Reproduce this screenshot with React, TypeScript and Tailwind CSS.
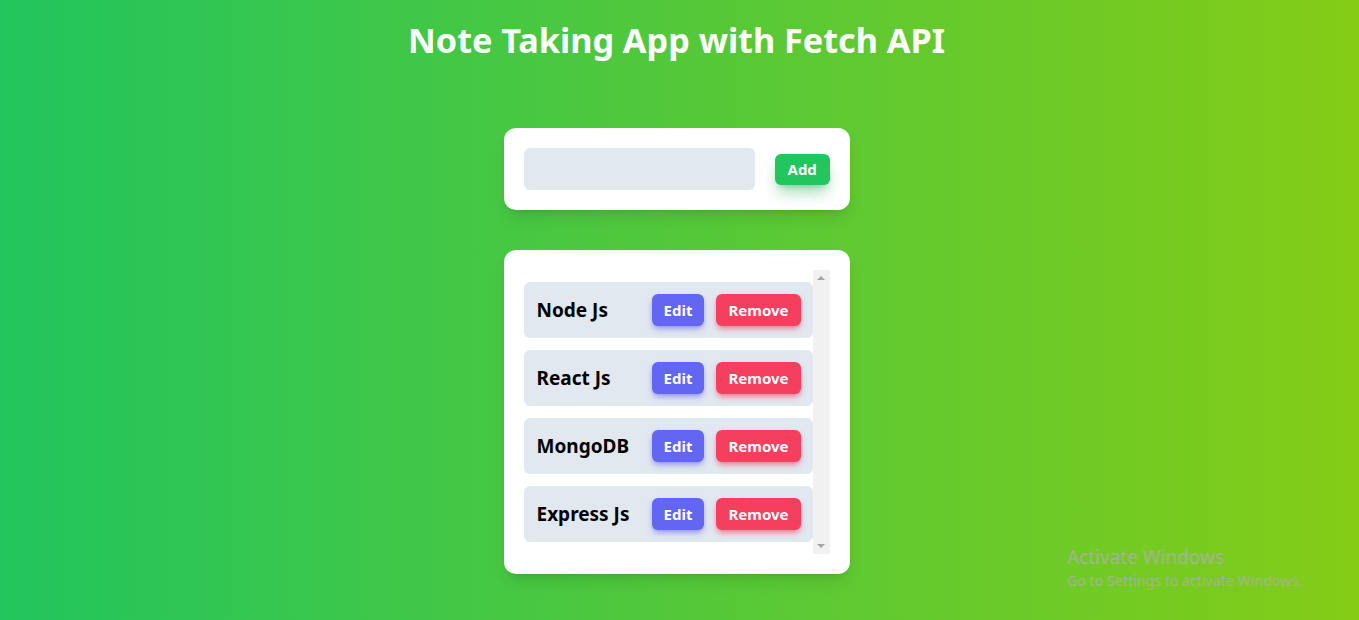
import React, { useState } from 'react';

type Note = { id: number; text: string };

const initialNotes: Note[] = [
  { id: 1, text: 'Node Js' },
  { id: 2, text: 'React Js' },
  { id: 3, text: 'MongoDB' },
  { id: 4, text: 'Express Js' },
];

export default function App() {
  const [notes] = useState<Note[]>(initialNotes);
  const [value, setValue] = useState('');

  return (
    <div
      className="relative min-h-[620px] w-full bg-linear-to-r/srgb from-[#22c55e] to-[#84cc16] flex flex-col items-center pt-5 pr-[6px]"
      style={{ fontFamily: '"Noto Sans", "Open Sans", sans-serif' }}
    >
      <h1 className="text-[34.2px] font-bold text-white leading-10">Note Taking App with Fetch API</h1>

      <div className="mt-[68px] w-[346px] bg-white rounded-xl shadow-lg p-5 flex items-center gap-5">
        <input
          value={value}
          onChange={(e) => setValue(e.target.value)}
          className="w-[231px] h-[42px] bg-[#e2e8f0] rounded-md px-3 outline-none"
        />
        <button className="h-[31px] px-[13px] bg-[#22c55e] text-white text-[15px] font-bold rounded-md shadow-lg shadow-[#16a34a]/40">
          Add
        </button>
      </div>

      <div className="mt-10 w-[346px] bg-white rounded-xl shadow-lg p-5">
        <div className="flex h-[284px]">
          <div className="flex-1 flex flex-col gap-3 py-3">
            {notes.map((note) => (
              <div key={note.id} className="h-14 bg-[#e2e8f0] rounded-md flex items-center pl-[13px] pr-3">
                <span className="flex-1 text-[19px] font-bold text-black">{note.text}</span>
                <div className="flex gap-3">
                  <button className="h-8 px-3 bg-[#6366f1] text-white text-[15px] font-bold rounded-md shadow-md shadow-[#6366f1]/50">
                    Edit
                  </button>
                  <button className="h-8 px-3 bg-[#f43f5e] text-white text-[15px] font-bold rounded-md shadow-md shadow-[#f43f5e]/50">
                    Remove
                  </button>
                </div>
              </div>
            ))}
          </div>
          <div className="w-[17px] bg-[#f1f1f1] flex flex-col items-center justify-between py-[6px]">
            <div className="w-0 h-0 border-l-[4px] border-r-[4px] border-b-[4px] border-l-transparent border-r-transparent border-b-[#a3a3a3]" />
            <div className="w-0 h-0 border-l-[4px] border-r-[4px] border-t-[4px] border-l-transparent border-r-transparent border-t-[#a3a3a3]" />
          </div>
        </div>
      </div>

      <div className="absolute left-[1067px] top-[548px] text-[#a4b396] leading-none">
        <div className="text-[19px]">Activate Windows</div>
        <div className="text-[14.2px] mt-[7px]">Go to Settings to activate Windows.</div>
      </div>
    </div>
  );
}
